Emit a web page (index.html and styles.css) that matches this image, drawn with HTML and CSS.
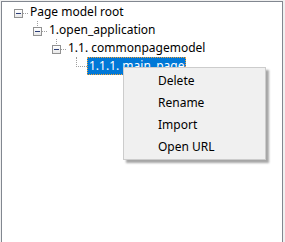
FILE: index.html
```html
<!DOCTYPE html>
<html lang="en">
<head>
    <meta charset="UTF-8" />
    <title>Page model tree</title>
    <link rel="stylesheet" href="styles.css">
</head>
<body>

    <div class="tree-panel">
        <div class="tree">
            <div class="row level-0">
                <span class="exp"></span>
                <span class="dots"></span>
                <span class="label">Page model root</span>
            </div>
            <div class="row level-1">
                <span class="exp child"></span>
                <span class="dots"></span>
                <span class="label">1.open_application</span>
            </div>
            <div class="row level-2">
                <span class="exp child"></span>
                <span class="dots"></span>
                <span class="label">1.1. commonpagemodel</span>
            </div>
            <div class="row level-3">
                <span class="leaf"></span>
                <span class="label selected">1.1.1. main_page</span>
            </div>
        </div>
    </div>

    <ul class="context-menu">
        <li>Delete</li>
        <li>Rename</li>
        <li>Import</li>
        <li>Open URL</li>
    </ul>

</body>
</html>
```

FILE: styles.css
```css
body {
    margin: 0;
    background: #f0f0f0;
    font-family: "Noto Sans", "Open Sans", sans-serif;
    font-size: 12px;
    color: #000;
    overflow: hidden;
}

.tree-panel {
    margin: 1px 2px 0 1px;
    height: 240px;
    border: 1px solid #828790;
    border-bottom: none;
    background: #fff;
}

.tree {
    padding-top: 1px;
}

.row {
    display: flex;
    align-items: flex-start;
    height: 18px;
}

.level-0 { padding-left: 12px; }
.level-1 { padding-left: 31px; }
.level-2 { padding-left: 50px; }
.level-3 { padding-left: 73px; }

.exp {
    position: relative;
    box-sizing: border-box;
    width: 9px;
    height: 9px;
    margin-top: 6px;
    border: 1px solid #919191;
    background: linear-gradient(#fff, #e8e8e8);
}

.exp::after {
    content: "";
    position: absolute;
    left: 1px;
    top: 3px;
    width: 5px;
    height: 1px;
    background: #2c3e78;
}

.exp.child::before {
    content: "";
    position: absolute;
    left: 3px;
    top: -7px;
    height: 5px;
    border-left: 1px dotted #a0a0a0;
}

.dots {
    width: 5px;
    margin-top: 10px;
    border-top: 1px dotted #a0a0a0;
}

.leaf {
    width: 10px;
    height: 9px;
    margin-left: 1px;
    border-left: 1px dotted #a0a0a0;
    border-bottom: 1px dotted #a0a0a0;
}

.label {
    box-sizing: border-box;
    height: 18px;
    line-height: 17px;
    padding: 0 2px;
    white-space: nowrap;
}

.label.selected {
    background: #0078d7;
    color: #fff;
    outline: 1px dotted #f2a33a;
    outline-offset: -1px;
}

.context-menu {
    position: absolute;
    left: 123px;
    top: 67px;
    box-sizing: border-box;
    width: 143px;
    height: 93px;
    margin: 0;
    padding: 2px 0;
    list-style: none;
    background: #f0f0f0;
    border: 1px solid #cccccc;
    box-shadow: 3px 3px 2px rgba(0, 0, 0, 0.35);
}

.context-menu li {
    height: 22px;
    line-height: 22px;
    padding-left: 34px;
}
```
